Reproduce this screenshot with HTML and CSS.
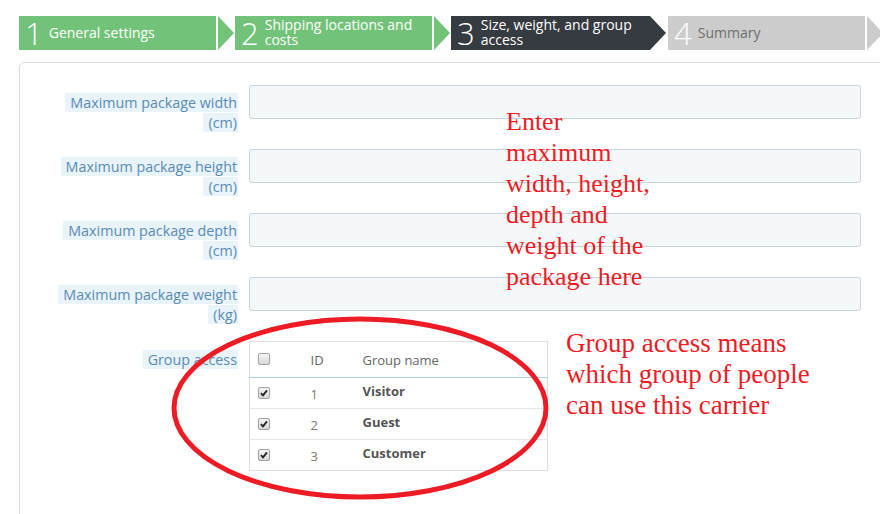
FILE: index.html
```html
<!DOCTYPE html>
<html lang="en">
<head>
    <meta charset="UTF-8">
    <title>Carrier wizard</title>
    <link rel="stylesheet" href="styles.css">
</head>
<body>
    <div class="wizard">
        <div class="step done">
            <div class="step-body"><span class="step-num">1</span><span class="step-label">General settings</span></div>
        </div>
        <div class="step done">
            <div class="step-body"><span class="step-num">2</span><span class="step-label">Shipping locations and<br>costs</span></div>
        </div>
        <div class="step current">
            <div class="step-body"><span class="step-num">3</span><span class="step-label">Size, weight, and group<br>access</span></div>
        </div>
        <div class="step todo">
            <div class="step-body"><span class="step-num">4</span><span class="step-label">Summary</span></div>
        </div>
    </div>

    <div class="panel">
        <div class="form-row">
            <div class="control-label"><span class="hint">Maximum package width (cm)</span></div>
            <input type="text" class="field">
        </div>
        <div class="form-row">
            <div class="control-label"><span class="hint">Maximum package height (cm)</span></div>
            <input type="text" class="field">
        </div>
        <div class="form-row">
            <div class="control-label"><span class="hint">Maximum package depth (cm)</span></div>
            <input type="text" class="field">
        </div>
        <div class="form-row">
            <div class="control-label"><span class="hint">Maximum package weight (kg)</span></div>
            <input type="text" class="field">
        </div>
        <div class="form-row group-row">
            <div class="control-label group-label"><span class="hint">Group access</span></div>
            <table class="group-table">
                <thead>
                    <tr>
                        <th class="col-check"><span class="check"></span></th>
                        <th class="col-id">ID</th>
                        <th>Group name</th>
                    </tr>
                </thead>
                <tbody>
                    <tr>
                        <td class="col-check"><span class="check on"><svg viewBox="0 0 12 12"><path d="M2.3 6.2 L4.8 8.8 L9.6 2.8"/></svg></span></td>
                        <td class="col-id"><span class="id">1</span></td>
                        <td class="name"><span>Visitor</span></td>
                    </tr>
                    <tr>
                        <td class="col-check"><span class="check on"><svg viewBox="0 0 12 12"><path d="M2.3 6.2 L4.8 8.8 L9.6 2.8"/></svg></span></td>
                        <td class="col-id"><span class="id">2</span></td>
                        <td class="name"><span>Guest</span></td>
                    </tr>
                    <tr>
                        <td class="col-check"><span class="check on"><svg viewBox="0 0 12 12"><path d="M2.3 6.2 L4.8 8.8 L9.6 2.8"/></svg></span></td>
                        <td class="col-id"><span class="id">3</span></td>
                        <td class="name"><span>Customer</span></td>
                    </tr>
                </tbody>
            </table>
        </div>
    </div>

    <!-- hand-drawn notes over the screenshot -->
    <svg class="circle-mark" width="880" height="514" viewBox="0 0 880 514">
        <ellipse cx="360" cy="408" rx="186" ry="89" fill="none" stroke="#ed1c24" stroke-width="5"/>
    </svg>
    <div class="note note-size">Enter<br>maximum<br>width, height,<br>depth and<br>weight of the<br>package here</div>
    <div class="note note-group">Group access means<br>which group of people<br>can use this carrier</div>
</body>
</html>
```

FILE: styles.css
```css
html, body {
    margin: 0;
    overflow: hidden;
}

body {
    font-family: "Open Sans", "Liberation Sans", sans-serif;
    background: #fff;
    width: 880px;
    height: 514px;
    position: relative;
}

/* wizard steps */
.wizard {
    display: flex;
    gap: 1px;
    padding: 16px 0 0 19px;
}

.step {
    display: flex;
    height: 34px;
}

.step-body {
    display: flex;
    align-items: center;
    width: 197px;
    height: 34px;
    padding-left: 6px;
    box-sizing: border-box;
    color: #fff;
}

.step::after {
    content: "";
    width: 0;
    height: 0;
    margin-left: 2px;
    border-top: 17px solid transparent;
    border-bottom: 17px solid transparent;
    border-left: 16px solid #72c279;
}

.step-num {
    font-size: 31px;
    font-weight: 300;
    line-height: 34px;
    margin-right: 6px;
}

.step-label {
    font-size: 14px;
    line-height: 15px;
    position: relative;
    top: -1px;
}

.done .step-body {
    background: #72c279;
}

.current .step-body {
    background: #363a41;
    width: 199px;
}

.current::after {
    margin-left: 0;
    margin-right: 1px;
    border-left-color: #363a41;
}

.todo .step-body {
    background: #cccccc;
}

.todo .step-label {
    color: #6f6f6f;
}

.todo::after {
    border-left-color: #cccccc;
}

/* panel */
.panel {
    margin: 12px 0 0 19px;
    width: 900px;
    height: 520px;
    border: 1px solid #dddddd;
    border-radius: 5px;
    padding: 22px 0 0 38px;
    box-sizing: border-box;
}

.form-row {
    display: grid;
    grid-template-columns: 180px 612px;
    column-gap: 11px;
    align-items: start;
    margin-bottom: 16px;
}

.control-label {
    padding-top: 8px;
    text-align: right;
    font-size: 14.3px;
    line-height: 20px;
    color: #5a8bb3;
}

.hint {
    background: #e8f3fa;
    padding: 0 1px 0 5px;
    -webkit-box-decoration-break: clone;
    box-decoration-break: clone;
}

.field {
    height: 34px;
    box-sizing: border-box;
    border: 1px solid #c7d6de;
    border-radius: 3px;
    background: #f5f8f9;
    margin: 0;
}

.group-row {
    margin-top: 2px;
}

.group-label {
    padding-top: 9px;
}

/* group table */
.group-table {
    width: 299px;
    border-collapse: collapse;
    border: 1px solid #dddddd;
    font-size: 13px;
}

.group-table th {
    height: 35px;
    text-align: left;
    font-weight: normal;
    color: #666;
    border-bottom: 1px solid #a9d2e8;
    padding: 0;
}

.group-table td {
    height: 30px;
    padding: 0;
    border-top: 1px solid #e6e6e6;
}

.group-table tbody tr:first-child td {
    border-top: none;
}

.col-check {
    width: 52px;
    padding-left: 8px !important;
    box-sizing: border-box;
}

.col-id {
    width: 52px;
    padding-left: 9px !important;
    box-sizing: border-box;
}

.id {
    color: #85786c;
    position: relative;
    top: 1px;
}

.name {
    font-weight: bold;
    color: #555;
    padding-left: 9px !important;
}

.name span {
    position: relative;
    top: -2px;
}

.group-table th:last-child {
    padding-left: 9px;
}

.check {
    display: inline-block;
    width: 12px;
    height: 12px;
    box-sizing: border-box;
    border: 1px solid #a0a0a0;
    border-radius: 2px;
    background: linear-gradient(#f4f4f4, #d8d8d8);
    vertical-align: middle;
    position: relative;
    top: -2px;
}

td .check {
    top: -2px;
}

.check svg {
    display: block;
    width: 10px;
    height: 10px;
}

.check path {
    fill: none;
    stroke: #222;
    stroke-width: 2.2;
}

/* annotations */
.circle-mark {
    position: absolute;
    left: 0;
    top: 0;
    pointer-events: none;
}

.note {
    position: absolute;
    font-family: "Liberation Serif", "Times New Roman", serif;
    color: #ed1c24;
    line-height: 31px;
}

.note-size {
    left: 506px;
    top: 106px;
    font-size: 26px;
}

.note-group {
    left: 566px;
    top: 328px;
    font-size: 27px;
}
```
